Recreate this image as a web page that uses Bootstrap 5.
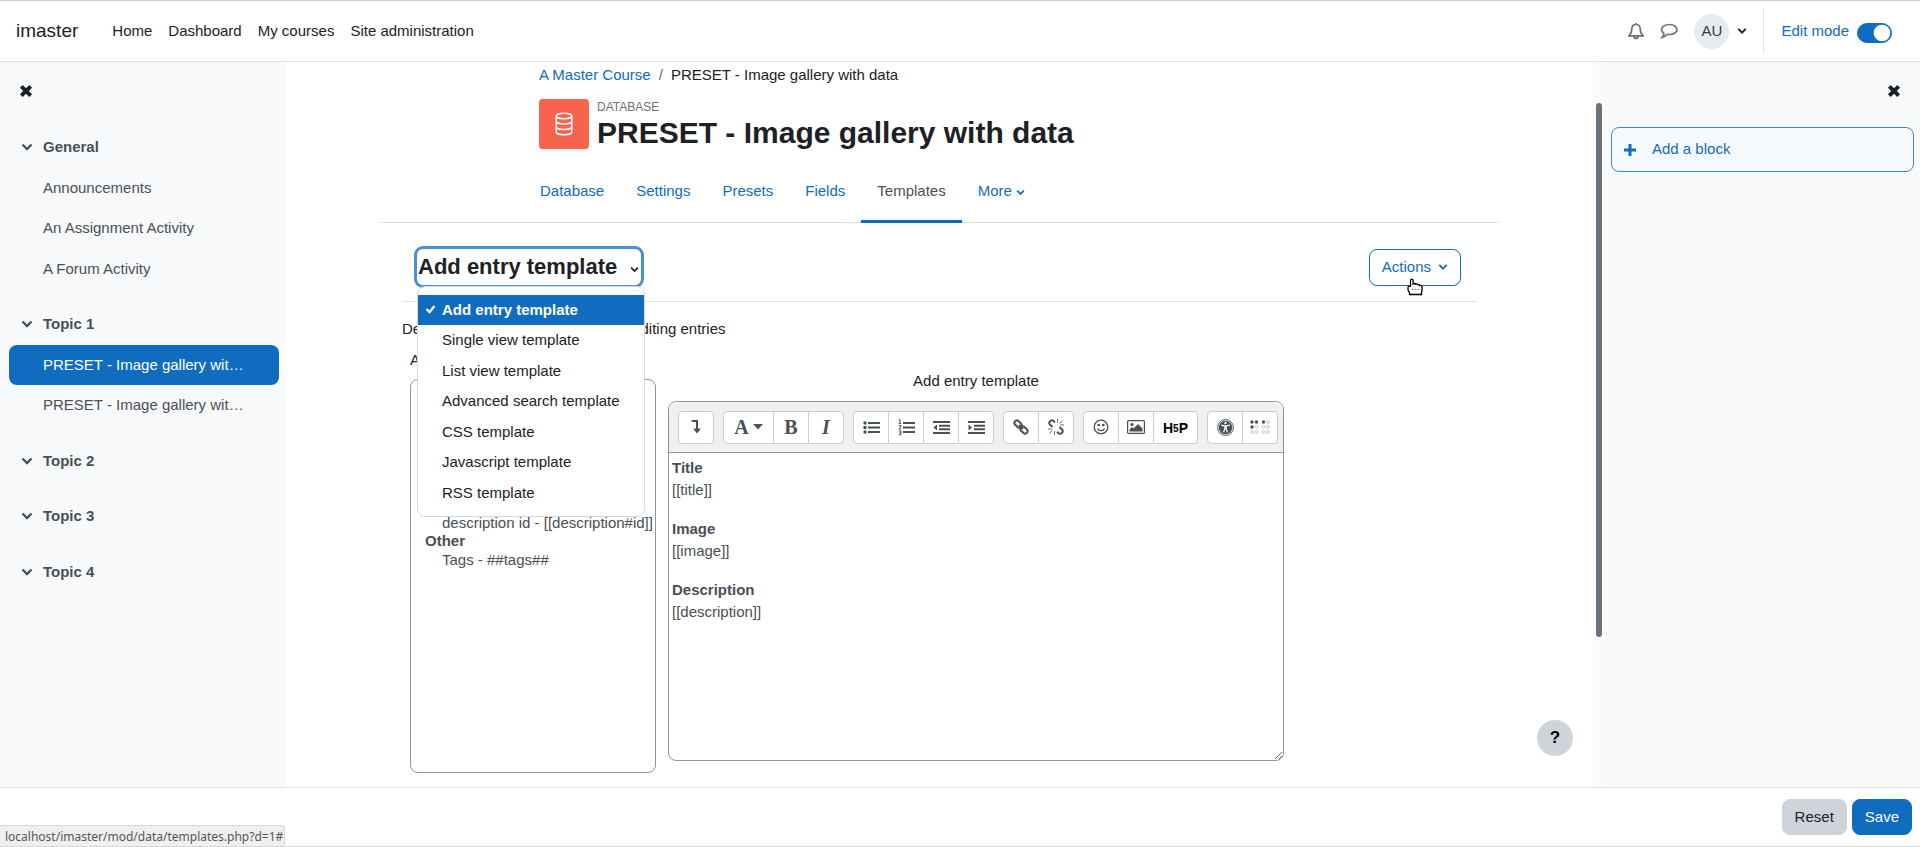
<!DOCTYPE html>
<html lang="en">
<head>
<meta charset="utf-8">
<meta name="viewport" content="width=device-width, initial-scale=1">
<title>PRESET - Image gallery with data</title>
<link rel="stylesheet" href="https://cdn.jsdelivr.net/npm/bootstrap@5.3.0/dist/css/bootstrap.min.css">
<style>
:root { --brand: #0f6cbf; --line: #dee2e6; --ink: #1d2125; --soft: #495057; --field: #8f959e; }
body { font-family: "Liberation Sans", Arial, sans-serif; font-size: 15px; line-height: 1.5; color: var(--ink); background: #fff; }
a { color: var(--brand); text-decoration: none; }
svg { display: block; flex: none; }
.topbar { border-top: 1px solid #ccc; border-bottom: 1px solid var(--line); height: 62px; padding: 0 28px 0 16px; }
.site-name { font-size: 19px; color: var(--ink); margin-right: 26px; }
.topbar .nav-link { color: var(--ink); padding: 8px; }
.avatar { width: 35px; height: 35px; background: #e9ecef; color: #343a40; }
.edit-mode { border-left: 1px solid var(--line); height: 45px; padding-left: 17px; }
.edit-mode label { color: var(--brand); }
.form-switch .form-check-input { width: 35px; height: 20px; margin: 4px 0 0; float: none; }
.form-switch .form-check-input:checked { background-color: var(--brand); border-color: var(--brand); background-image: url("data:image/svg+xml,%3csvg xmlns='http://www.w3.org/2000/svg' viewBox='-4 -4 8 8'%3e%3ccircle r='3.7' fill='%23fff'/%3e%3c/svg%3e"); }
.icon-btn { border: 0; background: none; padding: 0; color: inherit; }
.drawer { background: #f8f9fb; flex: none; }
.drawer-left { width: 285px; padding: 0 6px 0 9px; }
.drawer-right { width: 315px; padding: 0 6px; }
.drawer-head { height: 58px; margin-bottom: 7px; }
.drawer-left .drawer-head { padding-left: 10px; }
.drawer-right .drawer-head { padding-right: 13px; }
.course-section { margin-bottom: 15px; }
.course-section button, .course-section a { width: 100%; padding: 9px 32px 9px 34px; color: var(--soft); border-radius: 8px; }
.course-section button { padding-left: 12px; gap: 10px; font-weight: bold; }
.course-section a.current { background: var(--brand); color: #fff; }
.add-block { border: 1px solid #3f89cc; border-radius: 8px; background: #f5f9fd; height: 45px; padding: 0 12px; gap: 16px; color: var(--brand); width: 100%; }
.scroll-track { width: 12px; background: #fafafb; flex: none; padding: 41px 3px 0; }
.scroll-thumb { width: 6px; height: 78%; border-radius: 3px; background: #6a737b; }
.page-wide { max-width: 1120px; }
.page-narrow { max-width: 800px; }
.breadcrumb { padding-top: 2px; margin-bottom: 12px; --bs-breadcrumb-item-padding-x: 8px; }
.breadcrumb-item.active { color: var(--ink); }
.activity-icon { width: 50px; height: 50px; background: #f7634d; border-radius: 4px; }
.activity-kind { font-size: 12px; line-height: 16px; color: #6a737b; }
.activity-title { font-size: 30px; line-height: 36px; font-weight: bold; margin: 0; }
.tab-row { border-bottom: 1px solid var(--line); margin-top: 13px; }
.tab-row .nav { margin: 0 -15px -1px; }
.tab-row .nav-link { color: var(--brand); padding: 16px 16px 18px; border-bottom: 3px solid transparent; }
.tab-row .nav-link.active { color: var(--soft); border-bottom-color: var(--brand); }
.page-body { padding: 26px 23px 0; }
.template-bar { padding: 0 15px 15px; border-bottom: 1px solid var(--line); }
.template-pick { font-size: 22px; line-height: 36px; font-weight: bold; border: 0; background: #fff; padding: 0 2px 0 1px; border-radius: 6px; box-shadow: 0 0 0 3px #4a91d2; color: var(--ink); gap: 13px; }
.template-menu { top: 100%; left: 0; min-width: 227px; padding: 8px 0; border-radius: 8px; font-size: 15px; border-color: #d9d9d9; }
.template-menu .dropdown-item { padding: 4px 24px; color: var(--ink); }
.template-menu .dropdown-item.active { background: var(--brand); color: #fff; font-weight: bold; }
.tick { position: absolute; left: 7px; top: 17px; }
.btn-theme { --bs-btn-font-size: 15px; --bs-btn-border-radius: 8px; --bs-btn-padding-x: 12px; --bs-btn-padding-y: 6px; }
.btn-line { --bs-btn-color: var(--brand); --bs-btn-border-color: var(--brand); gap: 7px; }
.btn-solid { --bs-btn-color: #fff; --bs-btn-bg: var(--brand); --bs-btn-border-color: var(--brand); }
.btn-grey { --bs-btn-color: var(--ink); --bs-btn-bg: #ced4da; --bs-btn-border-color: #ced4da; }
.pointer { position: absolute; left: 37px; top: 29px; }
.intro { margin: 16px 0 9px; }
.tags-col { width: 246px; flex: none; }
.tags-col label { margin-bottom: 7px; }
.tag-list { width: 100%; height: 394px; border: 1px solid var(--field); border-radius: 8px; background: #fff; color: var(--soft); padding: 6px 2px; overflow: hidden; }
.tag-list optgroup { padding: 0 0 0 10px; font-weight: bold; }
.tag-list option { font-weight: normal; padding: 0 0 1px 19px; }
.work-row { gap: 12px; margin-left: 8px; }
.editor-col { flex: 0 1 616px; padding-top: 21px; }
.editor { border: 1px solid var(--field); border-radius: 8px; overflow: hidden; }
.editor-tools { background: #f0f0f0; border-bottom: 1px solid var(--field); padding: 9px 5px 8px 9px; gap: 9px; }
.tool-set .btn { width: 36px; height: 33px; padding: 0; border: 1px solid #ccc; background: #fff; color: var(--soft); display: flex; align-items: center; justify-content: center; gap: 4px; border-radius: 4px; }
.tool-set .tool-wide { width: 51px; }
.tool-set .tool-mid { width: 45px; }
.glyph { font-family: "Liberation Serif", "Times New Roman", serif; font-size: 20px; font-weight: bold; line-height: 24px; }
.h5p { font-size: 14px; font-weight: bold; color: #000; padding-top: 3px; }
.h5p span { font-size: 10px; vertical-align: 1px; }
.editor-area { height: 307px; padding: 4px 3px; color: var(--soft); resize: vertical; overflow: auto; }
.editor-area p { margin-bottom: 16px; }
.help-btn { position: absolute; right: 32px; bottom: 31px; width: 36px; height: 36px; border: 0; border-radius: 50%; background: #ced4da; font-weight: bold; font-size: 17px; }
.page-foot { height: 60px; border-top: 1px solid var(--line); border-bottom: 1px solid #ddd; padding: 0 8px; gap: 5px; }
.status-link { position: absolute; left: 0; bottom: 0; width: 285px; height: 22px; background: #efefef; border: 1px solid #d8d8d8; border-left: 0; border-top-right-radius: 4px; padding-left: 5px; font: 12px/22px "Noto Sans", sans-serif; color: #5c5454; white-space: nowrap; }
</style>
</head>
<body class="d-flex flex-column vh-100 overflow-hidden position-relative">
<svg width="0" height="0" class="position-absolute" aria-hidden="true">
  <symbol id="chev" viewBox="0 0 12 12"><path d="M1.500 3.500 6 8l4.500-4.500" fill="none" stroke="currentColor" stroke-width="2.300"/></symbol>
  <symbol id="cross" viewBox="0 0 12 12"><path d="M2 2l8 8M10 2l-8 8" stroke="currentColor" stroke-width="3.400"/></symbol>
</svg>

<header class="topbar d-flex align-items-center flex-shrink-0">
  <a class="site-name" href="#">imaster</a>
  <nav class="nav me-auto">
    <a class="nav-link" href="#">Home</a><a class="nav-link" href="#">Dashboard</a><a class="nav-link" href="#">My courses</a><a class="nav-link" href="#">Site administration</a>
  </nav>
  <div class="d-flex align-items-center">
    <button class="icon-btn me-3" aria-label="Notifications"><svg width="16" height="18" viewBox="0 0 16 18" fill="none" stroke="#6a737b" stroke-width="1.700"><path d="M8 1v1.500M1 13.800c2.200-2 2.800-4 2.800-7C3.800 4 5.500 2.500 8 2.500s4.200 1.500 4.200 4.300c0 3 .6 5 2.800 7zM6 14.500a2 2 0 0 0 4 0"/></svg></button>
    <button class="icon-btn me-3" aria-label="Messages"><svg width="18" height="16" viewBox="0 0 18 16" fill="none" stroke="#6a737b" stroke-width="1.700"><path d="M9.500 1.500c4.200 0 7.500 2.200 7.500 5s-3.300 5-7.500 5c-.8 0-1.600-.1-2.300-.2C6 12.800 4.300 14 2.200 14.300c1-1 1.600-2.300 1.700-3.800C2.500 9.500 1.500 8.200 1.500 6.500c0-2.800 3.500-5 8-5z"/></svg></button>
    <button class="icon-btn d-flex align-items-center" aria-label="User menu"><span class="avatar rounded-circle d-flex align-items-center justify-content-center">AU</span><svg class="ms-2" width="10" height="10"><use href="#chev"/></svg></button>
    <div class="edit-mode d-flex align-items-center ms-3">
      <label for="edit">Edit mode</label>
      <div class="form-check form-switch m-0 p-0 ps-2"><input class="form-check-input d-block" type="checkbox" role="switch" id="edit" checked></div>
    </div>
  </div>
</header>

<div class="d-flex flex-fill overflow-hidden">
  <aside class="drawer drawer-left">
    <div class="drawer-head d-flex align-items-center"><button class="icon-btn" aria-label="Close course index"><svg width="14" height="14"><use href="#cross"/></svg></button></div>
    <div class="course-section">
      <button class="icon-btn d-flex align-items-center"><svg width="12" height="12"><use href="#chev"/></svg>General</button>
      <a class="d-block text-truncate" href="#">Announcements</a>
      <a class="d-block text-truncate" href="#">An Assignment Activity</a>
      <a class="d-block text-truncate" href="#">A Forum Activity</a>
    </div>
    <div class="course-section">
      <button class="icon-btn d-flex align-items-center"><svg width="12" height="12"><use href="#chev"/></svg>Topic 1</button>
      <a class="d-block text-truncate current" href="#">PRESET - Image gallery with data</a>
      <a class="d-block text-truncate" href="#">PRESET - Image gallery with data</a>
    </div>
    <div class="course-section"><button class="icon-btn d-flex align-items-center"><svg width="12" height="12"><use href="#chev"/></svg>Topic 2</button></div>
    <div class="course-section"><button class="icon-btn d-flex align-items-center"><svg width="12" height="12"><use href="#chev"/></svg>Topic 3</button></div>
    <div class="course-section"><button class="icon-btn d-flex align-items-center"><svg width="12" height="12"><use href="#chev"/></svg>Topic 4</button></div>
  </aside>

  <main class="flex-fill position-relative overflow-hidden d-flex">
    <div class="flex-fill">
      <div class="page-wide mx-auto">
        <div class="page-narrow mx-auto">
          <ol class="breadcrumb">
            <li class="breadcrumb-item"><a href="#">A Master Course</a></li>
            <li class="breadcrumb-item active">PRESET - Image gallery with data</li>
          </ol>
          <div class="d-flex align-items-start gap-2">
            <div class="activity-icon d-flex align-items-center justify-content-center"><svg width="18" height="24" viewBox="0 0 18 24" fill="none" stroke="#fff" stroke-width="1.500"><ellipse cx="9" cy="4" rx="7.800" ry="2.800"/><path d="M1.200 4v16c0 1.500 3.500 2.800 7.800 2.800s7.800-1.300 7.800-2.800V4M1.200 9.300c0 1.500 3.500 2.800 7.800 2.800s7.800-1.300 7.800-2.800M1.200 14.700c0 1.500 3.500 2.800 7.800 2.800s7.800-1.300 7.800-2.800"/></svg></div>
            <div>
              <div class="activity-kind text-uppercase">Database</div>
              <h1 class="activity-title">PRESET - Image gallery with data</h1>
            </div>
          </div>
        </div>
        <div class="tab-row">
          <div class="page-narrow mx-auto">
            <nav class="nav flex-nowrap">
              <a class="nav-link" href="#">Database</a><a class="nav-link" href="#">Settings</a><a class="nav-link" href="#">Presets</a><a class="nav-link" href="#">Fields</a><a class="nav-link active" href="#">Templates</a><a class="nav-link d-flex align-items-center gap-1" href="#">More<svg class="mt-1" width="9" height="9"><use href="#chev"/></svg></a>
            </nav>
          </div>
        </div>
        <div class="page-body">
          <div class="template-bar d-flex justify-content-between">
            <div class="position-relative">
              <button class="template-pick d-flex align-items-center" aria-expanded="true">Add entry template<svg class="mt-1" width="9" height="9"><use href="#chev"/></svg></button>
              <ul class="dropdown-menu template-menu show">
                <li><a class="dropdown-item active" href="#"><svg class="tick" width="11" height="10" viewBox="0 0 11 10"><path d="M1.500 5l3 3 5-6" fill="none" stroke="#fff" stroke-width="2.200"/></svg>Add entry template</a></li>
                <li><a class="dropdown-item" href="#">Single view template</a></li>
                <li><a class="dropdown-item" href="#">List view template</a></li>
                <li><a class="dropdown-item" href="#">Advanced search template</a></li>
                <li><a class="dropdown-item" href="#">CSS template</a></li>
                <li><a class="dropdown-item" href="#">Javascript template</a></li>
                <li><a class="dropdown-item" href="#">RSS template</a></li>
              </ul>
            </div>
            <div class="position-relative">
              <button class="btn btn-theme btn-line d-flex align-items-center">Actions<svg width="10" height="10"><use href="#chev"/></svg></button>
              <svg class="pointer" width="18" height="18" viewBox="0 0 18 18"><path d="M4.500 9V2.500a1.300 1.300 0 0 1 2.600 0V6c.8-.8 2-.6 2.400.3.800-.6 2-.4 2.300.5.700-.5 1.800-.2 2 .7 1.300-.3 2.200.3 2.200 1.500v3.500c0 1-.6 1.600-.6 2.500v1.500H3.500V15c0-1-1.500-1.800-1.500-3.500V9.500c0-.8.800-1.400 1.500-1.400.5 0 1 .4 1 .9z" fill="#fff" stroke="#000" stroke-width="1.300"/><path d="M5.500 11.500h9" stroke="#888" stroke-dasharray="2 1"/></svg>
            </div>
          </div>
          <p class="intro">Defines the interface for adding or editing entries</p>
          <div class="d-flex work-row">
            <div class="tags-col">
              <label class="d-block" for="tags">Available tags</label>
              <select class="tag-list" id="tags" multiple>
                <optgroup label="Fields"><option>title - [[title]]</option><option>image - [[image]]</option><option>description - [[description]]</option></optgroup>
                <optgroup label="Field IDs"><option>title id - [[title#id]]</option><option>image id - [[image#id]]</option><option>description id - [[description#id]]</option></optgroup>
                <optgroup label="Other"><option>Tags - ##tags##</option></optgroup>
              </select>
            </div>
            <div class="editor-col">
              <div class="text-center mb-2" id="editor-label">Add entry template</div>
              <div class="editor">
                <div class="editor-tools d-flex">
                  <div class="btn-group tool-set">
                    <button class="btn" aria-label="Show more buttons"><svg width="10" height="14" viewBox="0 0 10 14" fill="currentColor"><path d="M0 0h7v8.500h2.800L6 13.500 2.200 8.500H5V2H1.500z"/></svg></button>
                  </div>
                  <div class="btn-group tool-set">
                    <button class="btn tool-wide" aria-label="Paragraph styles"><span class="glyph">A</span><svg width="10" height="6" viewBox="0 0 10 6" fill="currentColor"><path d="M0 0h10L5 5.500z"/></svg></button>
                    <button class="btn" aria-label="Bold"><span class="glyph">B</span></button>
                    <button class="btn" aria-label="Italic"><span class="glyph fst-italic">I</span></button>
                  </div>
                  <div class="btn-group tool-set">
                    <button class="btn" aria-label="Unordered list"><svg width="17" height="13" viewBox="0 0 17 13" fill="currentColor"><circle cx="2" cy="2" r="1.700"/><circle cx="2" cy="6.500" r="1.700"/><circle cx="2" cy="11" r="1.700"/><path d="M5 1h12v2H5zM5 5.500h12v2H5zM5 10h12v2H5z"/></svg></button>
                    <button class="btn" aria-label="Ordered list"><svg width="17" height="17" viewBox="0 0 17 17" fill="currentColor"><path d="M5 3h12v2H5zM5 7.500h12v2H5zM5 12h12v2H5z"/><path d="M.8 1.200 2 .600v4M.600 4.600h2.600M.8 6.500h2v1.700L.800 10h2.400M.8 12h2.100v3.800H.700M1.300 13.800H3" fill="none" stroke="currentColor"/></svg></button>
                    <button class="btn" aria-label="Outdent"><svg width="17" height="13" viewBox="0 0 17 13" fill="currentColor"><path d="M0 0h17v2H0zM6 3.700h11v2H6zM6 7.300h11v2H6zM0 11h17v2H0zM4 3.500v6l-3.500-3z"/></svg></button>
                    <button class="btn" aria-label="Indent"><svg width="17" height="13" viewBox="0 0 17 13" fill="currentColor"><path d="M0 0h17v2H0zM6 3.700h11v2H6zM6 7.300h11v2H6zM0 11h17v2H0zM.500 3.500v6l3.500-3z"/></svg></button>
                  </div>
                  <div class="btn-group tool-set">
                    <button class="btn" aria-label="Link"><svg width="16" height="16" viewBox="0 0 16 16" fill="none" stroke="currentColor" stroke-width="2"><rect x="1" y="2.500" width="8" height="5" rx="2.500" transform="rotate(45 5 5)"/><rect x="7" y="8.500" width="8" height="5" rx="2.500" transform="rotate(45 11 11)"/><path d="M6 6l4 4"/></svg></button>
                    <button class="btn" aria-label="Unlink"><svg width="16" height="16" viewBox="0 0 16 16" fill="none" stroke="currentColor" stroke-width="2"><path d="M7 3.200 5.500 1.900a2.200 2.200 0 0 0-3.200 0l-.4.400a2.200 2.200 0 0 0 0 3.200L4.500 8M9 12.800l1.500 1.300a2.200 2.200 0 0 0 3.200 0l.4-.4a2.200 2.200 0 0 0 0-3.200L11.500 8"/><path d="M9.500 0v4M16 6h-4M14.500 1.500l-3 3M6.500 12v4M0 10h4M1.500 14.500l3-3" stroke-width=".8"/></svg></button>
                  </div>
                  <div class="btn-group tool-set">
                    <button class="btn" aria-label="Emoji picker"><svg width="16" height="16" viewBox="0 0 16 16" fill="none" stroke="currentColor" stroke-width="1.300"><circle cx="8" cy="8" r="6.800"/><path d="M4.500 9.500c.6 1.500 2 2.200 3.500 2.200s2.900-.7 3.500-2.200"/><circle cx="5.700" cy="6" r=".7" fill="currentColor"/><circle cx="10.300" cy="6" r=".7" fill="currentColor"/></svg></button>
                    <button class="btn" aria-label="Insert image"><svg width="18" height="14" viewBox="0 0 18 14"><rect x=".6" y=".6" width="16.800" height="12.800" rx="1" fill="none" stroke="currentColor" stroke-width="1.200"/><circle cx="5" cy="4.500" r="1.600" fill="currentColor"/><path d="M2.500 11.500V9.500L5 7l1.500 1.500 4.500-4.500 4.500 4.500v3z" fill="currentColor"/></svg></button>
                    <button class="btn tool-mid"><span class="h5p">H<span>5</span>P</span></button>
                  </div>
                  <div class="btn-group tool-set">
                    <button class="btn" aria-label="Accessibility checker"><svg width="17" height="17" viewBox="0 0 17 17"><circle cx="8.500" cy="8.500" r="7.900" fill="none" stroke="currentColor" stroke-width="1"/><circle cx="8.500" cy="8.500" r="6.700" fill="currentColor"/><circle cx="8.500" cy="4" r="1.200" fill="#fff"/><path d="M4.200 6.200l2.900.7h2.800l2.900-.7M7.900 7v2.500l-1.300 3.700M9.100 7v2.500l1.300 3.700" fill="none" stroke="#fff" stroke-width="1.200"/></svg></button>
                    <button class="btn" aria-label="Screenreader helper"><svg width="20" height="15" viewBox="0 0 20 15"><g fill="currentColor"><circle cx="2" cy="2" r="1.700"/><circle cx="6.500" cy="2" r="1.700"/><circle cx="2" cy="7" r="1.700"/><circle cx="13.500" cy="2" r="1.700"/></g><g fill="none" stroke="#bbb" stroke-width=".8"><circle cx="6.500" cy="7" r="1.400"/><circle cx="2" cy="12" r="1.400"/><circle cx="6.500" cy="12" r="1.400"/><circle cx="18" cy="2" r="1.400"/><circle cx="13.500" cy="7" r="1.400"/><circle cx="18" cy="7" r="1.400"/><circle cx="13.500" cy="12" r="1.400"/><circle cx="18" cy="12" r="1.400"/></g></svg></button>
                  </div>
                </div>
                <div class="editor-area" contenteditable="true" role="textbox" aria-labelledby="editor-label" spellcheck="false">
                  <p><b>Title</b><br>[[title]]</p>
                  <p><b>Image</b><br>[[image]]</p>
                  <p><b>Description</b><br>[[description]]</p>
                </div>
              </div>
            </div>
          </div>
        </div>
      </div>
    </div>
    <div class="scroll-track"><div class="scroll-thumb"></div></div>
    <button class="help-btn" aria-label="Help">?</button>
  </main>

  <aside class="drawer drawer-right">
    <div class="drawer-head d-flex align-items-center justify-content-end"><button class="icon-btn" aria-label="Close block drawer"><svg width="14" height="14"><use href="#cross"/></svg></button></div>
    <a class="add-block d-flex align-items-center" href="#"><svg width="12" height="12" viewBox="0 0 12 12"><path d="M6 0v12M0 6h12" stroke="currentColor" stroke-width="3"/></svg>Add a block</a>
  </aside>
</div>

<footer class="page-foot d-flex align-items-center justify-content-end flex-shrink-0">
  <button class="btn btn-theme btn-grey">Reset</button>
  <button class="btn btn-theme btn-solid">Save</button>
</footer>
<div class="status-link">localhost/imaster/mod/data/templates.php?d=1#</div>
<script src="https://cdn.jsdelivr.net/npm/bootstrap@5.3.0/dist/js/bootstrap.bundle.min.js"></script>
</body>
</html>
